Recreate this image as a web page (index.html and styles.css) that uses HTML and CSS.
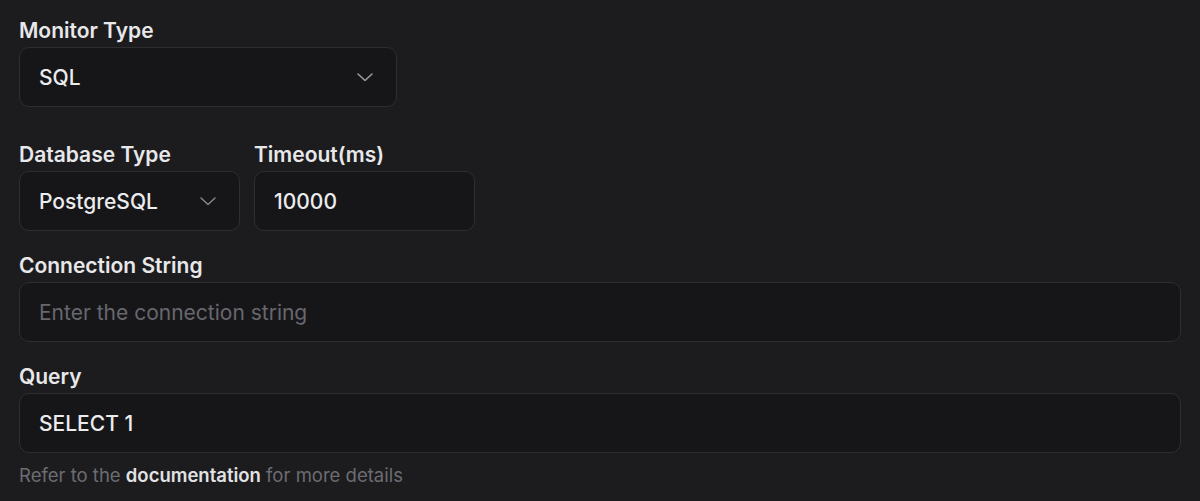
FILE: index.html
```html
<!DOCTYPE html>
<html>
<head>
<meta charset="utf-8">
<link rel="stylesheet" href="styles.css">
</head>
<body>
<div class="form">
  <div class="field field-first">
    <label class="label">Monitor Type</label>
    <div class="control select w-monitor">
      <span class="value">SQL</span>
      <svg class="chev" width="16" height="9" viewBox="0 0 16 9"><path d="M1 1 L8 7.5 L15 1" fill="none" stroke="#9a9aa0" stroke-width="1.6" stroke-linecap="round" stroke-linejoin="round"/></svg>
    </div>
  </div>
  <div class="row">
    <div class="field">
      <label class="label">Database Type</label>
      <div class="control select w-half">
        <span class="value">PostgreSQL</span>
        <svg class="chev" width="16" height="9" viewBox="0 0 16 9"><path d="M1 1 L8 7.5 L15 1" fill="none" stroke="#8a8a90" stroke-width="1.4" stroke-linecap="round" stroke-linejoin="round"/></svg>
      </div>
    </div>
    <div class="field">
      <label class="label">Timeout(ms)</label>
      <div class="control w-half">
        <span class="value">10000</span>
      </div>
    </div>
  </div>
  <div class="field">
    <label class="label">Connection String</label>
    <div class="control">
      <span class="placeholder">Enter the connection string</span>
    </div>
  </div>
  <div class="field">
    <label class="label">Query</label>
    <div class="control">
      <span class="value">SELECT 1</span>
    </div>
    <p class="help">Refer to the <strong>documentation</strong> for more details</p>
  </div>
</div>
</body>
</html>
```
FILE: styles.css
```css
html, body {
  margin: 0;
  padding: 0;
  background: #1c1c1f;
  font-family: Inter, "Noto Sans", "Liberation Sans", sans-serif;
  color: #e6e6e8;
}
.form {
  padding: 16px 19px 0 19px;
  display: flex;
  flex-direction: column;
  gap: 20px;
}
.field {
  display: flex;
  flex-direction: column;
  gap: 3px;
}
.field-first {
  margin-bottom: 13px;
}
.row {
  display: flex;
  gap: 14px;
}
.label {
  padding-top: 2px;
  font-size: 21px;
  line-height: 26px;
  font-weight: 600;
  color: #e8e8ea;
}
.control {
  box-sizing: border-box;
  height: 60px;
  border: 1px solid #2d2d32;
  border-radius: 10px;
  background: #161619;
  display: flex;
  align-items: center;
  padding: 0 23px 0 19px;
  font-size: 21px;
}
.w-monitor { width: 378px; }
.w-half { width: 221px; }
.select {
  justify-content: space-between;
}
.value {
  color: #ececee;
  font-weight: 500;
}
.placeholder {
  color: #67676d;
}
.chev {
  display: block;
}
.help {
  margin: 7px 0 0 0;
  font-size: 18.5px;
  line-height: 24px;
  color: #6c6c72;
}
.help strong {
  color: #e2e2e4;
  font-weight: 600;
}
```
